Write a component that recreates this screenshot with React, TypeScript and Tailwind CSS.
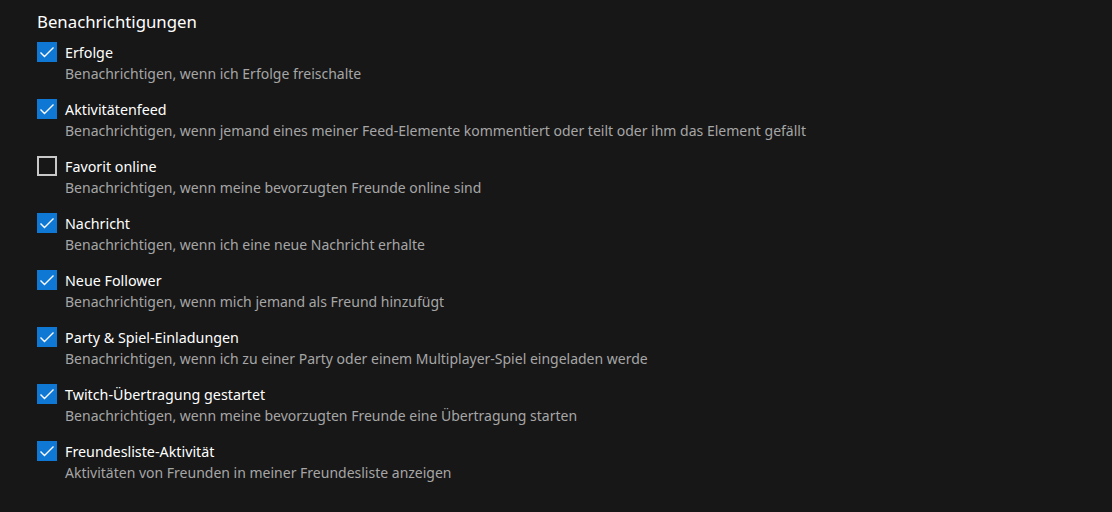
const items = [
  { title: 'Erfolge', desc: 'Benachrichtigen, wenn ich Erfolge freischalte', checked: true },
  {
    title: 'Aktivitätenfeed',
    desc: 'Benachrichtigen, wenn jemand eines meiner Feed-Elemente kommentiert oder teilt oder ihm das Element gefällt',
    checked: true
  },
  { title: 'Favorit online', desc: 'Benachrichtigen, wenn meine bevorzugten Freunde online sind', checked: false },
  { title: 'Nachricht', desc: 'Benachrichtigen, wenn ich eine neue Nachricht erhalte', checked: true },
  { title: 'Neue Follower', desc: 'Benachrichtigen, wenn mich jemand als Freund hinzufügt', checked: true },
  {
    title: 'Party & Spiel-Einladungen',
    desc: 'Benachrichtigen, wenn ich zu einer Party oder einem Multiplayer-Spiel eingeladen werde',
    checked: true
  },
  {
    title: 'Twitch-Übertragung gestartet',
    desc: 'Benachrichtigen, wenn meine bevorzugten Freunde eine Übertragung starten',
    checked: true
  },
  {
    title: 'Freundesliste-Aktivität',
    desc: 'Aktivitäten von Freunden in meiner Freundesliste anzeigen',
    checked: true
  }
]

function Box({ checked }: { checked: boolean }) {
  if (!checked) {
    return <div className="h-5 w-5 shrink-0 border-2 border-[#c8c8c8]" />
  }
  return (
    <div className="flex h-5 w-5 shrink-0 items-center justify-center bg-[#0f78d4]">
      <svg width="20" height="20" viewBox="0 0 20 20" fill="none">
        <path d="M3.5 10.5 L7.5 14.5 L16.5 5.5" stroke="white" strokeWidth="1.4" />
      </svg>
    </div>
  )
}

export default function App() {
  return (
    <div className="h-[512px] w-[1112px] bg-[#171717] pl-[37px] pt-[9px] font-['Noto_Sans',sans-serif]">
      <h2 className="text-[16.8px] leading-[26px] text-white">Benachrichtigungen</h2>
      <div className="mt-[7px] flex flex-col gap-[14px]">
        {items.map((it) => (
          <div key={it.title} className="flex gap-2">
            <Box checked={it.checked} />
            <div>
              <div className="text-[14.3px] leading-[21px] text-white">{it.title}</div>
              <div className="text-[14px] leading-[22px] text-[#a6a6a6]">{it.desc}</div>
            </div>
          </div>
        ))}
      </div>
    </div>
  )
}
